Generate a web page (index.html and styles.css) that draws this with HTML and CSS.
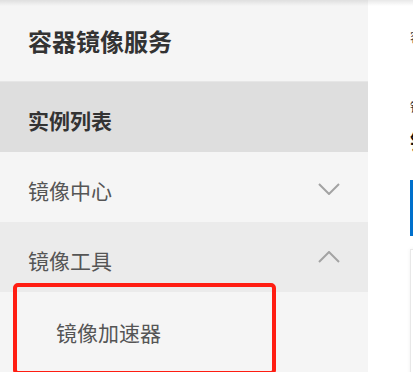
FILE: index.html
```html
<!DOCTYPE html>
<html lang="zh-CN">
<head>
  <meta charset="UTF-8">
  <title>容器镜像服务</title>
  <meta name="viewport" content="width=device-width, initial-scale=1">
  <link rel="stylesheet" href="styles.css">
</head>
<body>
  <div class="page">
    <aside class="sidebar">
      <div class="side-title">容器镜像服务</div>
      <div class="menu-item active">实例列表</div>
      <div class="menu-item">
        <span>镜像中心</span>
        <svg class="chevron" width="22" height="12" viewBox="0 0 22 12"><polyline points="1,1 11,11 21,1" fill="none" stroke="#a3a3a3" stroke-width="2"/></svg>
      </div>
      <div class="menu-item open">
        <span>镜像工具</span>
        <svg class="chevron" width="22" height="12" viewBox="0 0 22 12"><polyline points="1,11 11,1 21,11" fill="none" stroke="#a3a3a3" stroke-width="2"/></svg>
      </div>
      <div class="sub-item">镜像加速器</div>
    </aside>

    <main class="content">
      <div class="crumb">容器镜像服务 / 镜像工具 / 镜像加速器</div>
      <div class="sub-head">镜像加速器</div>
      <h1 class="page-title">镜像加速器</h1>
      <div class="notice">使用加速器可以提升获取Docker官方镜像的速度</div>
      <div class="card">加速器地址</div>
    </main>

    <div class="highlight"></div>
  </div>
</body>
</html>
```

FILE: styles.css
```css
* { box-sizing: border-box; }
html, body { margin: 0; height: 100%; overflow: hidden; }
body { font-family: "Noto Sans CJK SC", "Noto Sans", sans-serif; background: #fff; }

.page {
  position: relative;
  display: flex;
  height: 372px;
}
.page::before {
  content: "";
  position: absolute;
  left: 0; right: 0; top: 0;
  height: 6px;
  background: linear-gradient(rgba(0,0,0,0.09), rgba(0,0,0,0));
  z-index: 2;
}

.sidebar {
  width: 368px;
  flex-shrink: 0;
  background: #f5f5f5;
}
.side-title {
  height: 82px;
  padding: 24px 0 0 28px;
  font-size: 24px;
  line-height: 34px;
  font-weight: bold;
  color: #333;
  border-bottom: 1px solid #e6e6e6;
}
.menu-item {
  height: 70px;
  display: flex;
  align-items: center;
  justify-content: space-between;
  padding: 6px 28px 0 28px;
  font-size: 21px;
  color: #555;
}
.menu-item.active {
  background: #dedede;
  font-weight: bold;
  color: #333;
}
.menu-item.open { background: #ebebeb; }
.chevron { margin-top: -2px; }
.menu-item.open .chevron { margin-top: -6px; }
.sub-item {
  height: 80px;
  display: flex;
  align-items: center;
  padding-left: 56px;
  font-size: 21px;
  color: #555;
}

.content {
  flex: 1;
  padding: 28px 0 0 42px;
  white-space: nowrap;
  overflow: hidden;
}
.crumb { font-size: 12px; color: #333; line-height: 18px; }
.sub-head { margin-top: 52px; font-size: 12px; color: #333; line-height: 18px; }
.page-title { margin: 13px 0 0; font-size: 20px; line-height: 26px; color: #111; }
.notice {
  margin-top: 25px;
  height: 56px;
  border-left: 4px solid #0070cc;
  background: #fff;
  padding: 18px 14px;
  font-size: 12px;
  color: #333;
}
.card {
  margin-top: 13px;
  height: 140px;
  border-left: 1px solid #e8e8e8;
  border-top: 1px solid #e8e8e8;
  box-shadow: 0 0 4px rgba(0,0,0,0.06);
  padding: 16px;
  font-size: 12px;
  color: #fff;
}

.highlight {
  position: absolute;
  left: 13px;
  top: 283px;
  width: 263px;
  height: 92px;
  border: 4px solid #ff1d12;
  border-radius: 5px;
  z-index: 3;
}
```
